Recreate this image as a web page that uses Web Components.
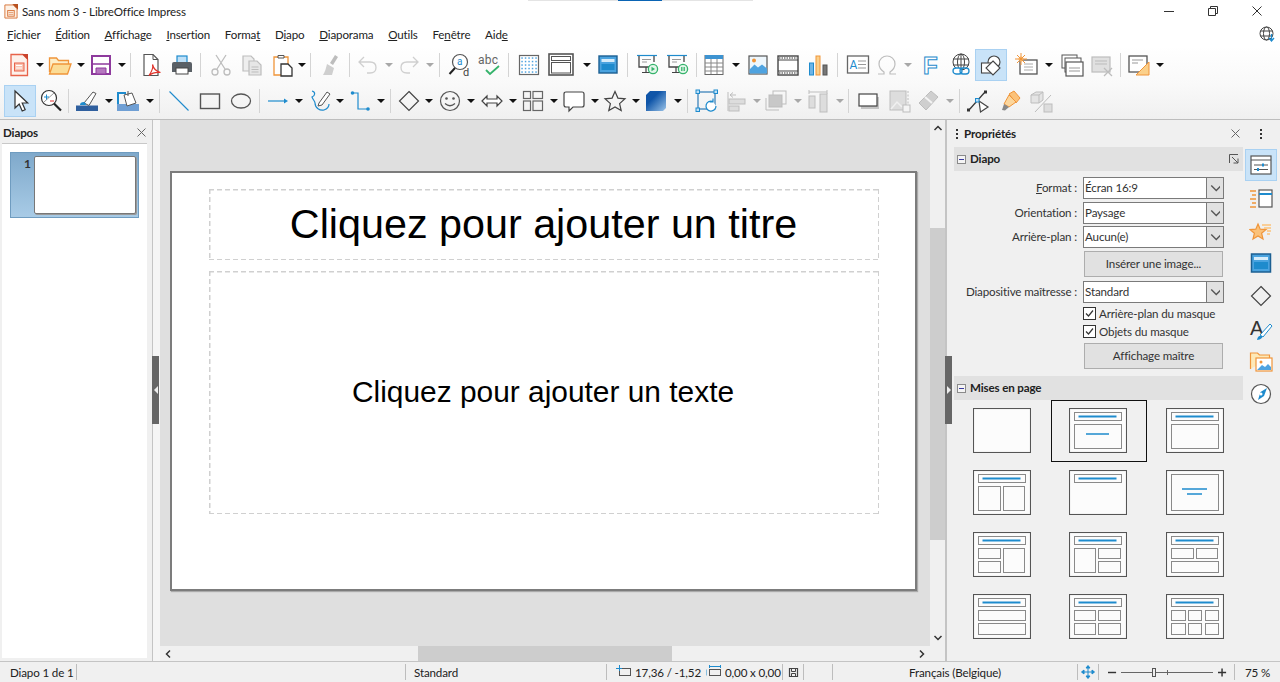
<!DOCTYPE html>
<html lang="fr">
<head>
<meta charset="utf-8">
<title>Sans nom 3 - LibreOffice Impress</title>
<style>
  html, body { margin: 0; height: 100%; overflow: hidden; background: #f0f0f0; }
  body { font: 11.6px Lato, Roboto, "Liberation Sans", sans-serif; letter-spacing: -.14px; color: #222; }
</style>
</head>
<body>
<lo-app>
  <lo-titlebar>Sans nom 3 - LibreOffice Impress</lo-titlebar>
  <lo-menubar></lo-menubar>
  <lo-toolbar h="38" items="new:7 a:5 open:3.5 a:5 save:4 a:5.5 s:4 pdf:8 print:7 s:5.5 cut:8 copy:7 paste:7 a:3.5 s:3.5 clone:7.5 s:6.5 undo:6.5 g:5 redo:3.5 g:5.5 s:4.5 find:8.5 spell:6 s:5.5 grid:8.5 display:8 a:10 master:5 s:6.5 start:7.5 start2:6 s:6.5 table:5 a:6.5 image:5.5 movie:6.5 chart:6 s:6.5 textbox:8 omega:5 g:5.5 fontwork:5 link:8 shapes*:5.5 newslide:12.5 a:6 dup:6.5 del:6.5 s:5.5 layout:6.5 a:5"></lo-toolbar>
  <lo-toolbar h="36" line items="select*:7.5 zoom:7 s:5 linecolor:6.5 a:6 fill:3 a:6 s:4.5 line:7 rect:7 ellipse:7.5 s:5.5 arrowline:6.5 a:5 curve:4.5 a:4.5 connector:3.5 a:5.5 s:4.5 diamond:6 a:4 smiley:5 a:5.5 dbl:4.5 a:5 flow:4 a:5.5 callout:4 a:5 star:4 a:5 cube:4 a:6 s:4.5 rotate:7.5 align:6 g:4 arrange:3 g:6 dist:4 g:6 s:3.5 shadow:8 crop:7.5 filter:4 g:6 s:4.5 points:6.5 glue:8 extrusion:7"></lo-toolbar>
  <lo-main>
    <lo-slides></lo-slides>
    <lo-workspace>
      <lo-slide></lo-slide>
    </lo-workspace>
    <lo-sidebar></lo-sidebar>
  </lo-main>
  <lo-statusbar></lo-statusbar>
</lo-app>

<script>
const BLUE = '#1e8bcd', DARK = '#4a4a4a', GREY = '#bdbdbd', ORANGE = '#f0953a';

function svg(inner, size = 24, vb = 24) {
  return `<svg xmlns="http://www.w3.org/2000/svg" width="${size}" height="${size}" viewBox="0 0 ${vb} ${vb}" fill="none" stroke-linejoin="miter">${inner}</svg>`;
}

function gridDots() {
  let s = '';
  for (let y = 5; y < 21; y += 3.5) for (let x = 5; x < 21; x += 3.5) s += `<rect x="${x - .7}" y="${y - .7}" width="1.5" height="1.5" fill="#4fa3e0"/>`;
  return s;
}

const screenIcon = `<path d="M2 2.5h20" stroke="${BLUE}" stroke-width="1.2"/><path d="M4 3v11h15" stroke="#444" stroke-width="1.3"/><path d="M19 3v6" stroke="#444" stroke-width="1.3"/><path d="M7 6.5h9M7 9h5" stroke="#999"/><path d="M11 14v5M7 19.5h8" stroke="#444" stroke-width="1.2"/><circle cx="18" cy="16" r="4.6" fill="#e3f6ea" stroke="#35b36b" stroke-width="1.3"/>`;

const ICONS = {
  new: `<path d="M4 1.5h12l4.5 4.5v16.500H4z" fill="#fdf1eb" stroke="#e8634a" stroke-width="1.3"/><path d="M15 1h6v6z" fill="#c9432c"/><rect x="7.500" y="10" width="9.500" height="8" fill="#f9c4b2" stroke="#e8634a"/><path d="M9 12.500h6M9 15h6" stroke="#fff"/>`,
  open: `<path d="M1.500 19V5h7l2 2.500h10V12" fill="#fdeec8" stroke="${ORANGE}" stroke-width="1.300"/><path d="M1.500 21l3.500-10h18l-3.500 10z" fill="#fbdc96" stroke="${ORANGE}" stroke-width="1.300"/>`,
  save: `<path d="M3 3h18v18H3z" fill="#fff" stroke="#8e3a9d" stroke-width="2"/><path d="M3 11h18" stroke="#8e3a9d" stroke-width="1.500"/><path d="M7 21v-6h10v6z" fill="#b678c0" stroke="#8e3a9d"/>`,
  pdf: `<path d="M5 1.500h9l5 5v16H5z" fill="#fff" stroke="#555" stroke-width="1.200"/><path d="M14 1.500v5h5" stroke="#555"/><path d="M10 22.500c3.500-5 4.500-8 3.500-11 1 4 3.500 7 8 8-4-.5-8.500.5-11.500 3z" stroke="#e0342c" stroke-width="1.200" fill="#fff"/>`,
  print: `<rect x="7" y="3" width="10" height="7" fill="#bfe0f7" stroke="${BLUE}" stroke-width="1.200"/><path d="M2 19v-8q0-2 2-2h16q2 0 2 2v8z" fill="#5a6066"/><rect x="6" y="15" width="12" height="6" fill="#fff" stroke="#444"/>`,
  cut: `<g stroke="${GREY}" stroke-width="1.300"><path d="M7 2l9 14M17 2L8 16"/><circle cx="6" cy="19" r="3"/><circle cx="18" cy="19" r="3"/></g>`,
  copy: `<path d="M3 3h8l3 3v12H3z" fill="#eee" stroke="${GREY}" stroke-width="1.200"/><path d="M9 8h8l4 4v10H9z" fill="#e6e6e6" stroke="${GREY}" stroke-width="1.200"/><path d="M11.500 14h7M11.500 16.500h7M11.500 19h7" stroke="${GREY}"/>`,
  paste: `<path d="M3 4h14v18H3z" fill="#fff" stroke="${ORANGE}" stroke-width="1.300"/><path d="M7 5V2.500h6V5z" fill="#fff" stroke="#555"/><path d="M10 11h7l4 4v8H10z" fill="#fff" stroke="#333" stroke-width="1.300"/>`,
  clone: `<path d="M17 2l3 2-5 8-3-2z" fill="${GREY}"/><path d="M9 11l7 4-2 7H5c2-3 3-7 4-11z" fill="#cfcfcf"/>`,
  undo: `<path d="M8 4L3 9l5 5M3 9h11q6 0 6 5.500T14 20h-3" stroke="#cfcfcf" stroke-width="1.300"/>`,
  redo: `<path d="M16 4l5 5-5 5M21 9H10q-6 0-6 5.500T10 20h3" stroke="#cfcfcf" stroke-width="1.300"/>`,
  find: `<circle cx="12" cy="9" r="7.500" fill="#fff" stroke="#555" stroke-width="1.200"/><path d="M7 15l-5.500 6" stroke="#222" stroke-width="2"/><text x="9" y="12" font-size="10" fill="${BLUE}" font-family="Roboto">a</text><text x="15" y="23" font-size="11" fill="#444" font-family="Roboto">d</text>`,
  spell: `<text x="0" y="11" font-size="12" letter-spacing=".3" fill="#666" font-family="Roboto">abc</text><path d="M8 17l4 4 9-8" stroke="#35b36b" stroke-width="1.800"/>`,
  grid: `<rect x="2.500" y="2.500" width="19" height="19" fill="#fff" stroke="#666" stroke-width="1.200"/>${gridDots()}`,
  display: `<rect x="0" y="1" width="24" height="21" fill="#fff" stroke="#555" stroke-width="1.600"/><rect x="2.500" y="3.500" width="19" height="4" stroke="#555"/><rect x="2.500" y="9.500" width="19" height="10.500" stroke="#555"/>`,
  master: `<rect x="3" y="3" width="18" height="17" fill="#4aa3df" stroke="#1c5f92" stroke-width="1.400"/><rect x="5.500" y="6" width="13" height="3" fill="#d6ecfa"/><rect x="5.500" y="11" width="13" height="6" fill="#1e8bcd"/>`,
  start: `${screenIcon}<path d="M16.500 13.800v4.400l3.500-2.200z" fill="#35b36b"/>`,
  start2: `${screenIcon}<path d="M16.800 14v4M19.200 14v4" stroke="#35b36b" stroke-width="1.300"/>`,
  table: `<rect x="3" y="2.500" width="18" height="19" fill="#fff" stroke="#666"/><rect x="3" y="2" width="18" height="4" fill="#3d93d1"/><path d="M3 10h18M3 14h18M3 18h18M9 6v15M15 6v15" stroke="#888"/>`,
  image: `<rect x="3" y="3" width="18" height="18" fill="#eef7fd" stroke="#555" stroke-width="1.200"/><circle cx="8" cy="7.500" r="2" fill="${ORANGE}"/><path d="M3.500 20.500v-4l5-5 3.500 3 4-3 5 4v5z" fill="#4fa3e0"/>`,
  movie: `<rect x="2" y="3" width="20" height="19" fill="#fff" stroke="#444" stroke-width="1.400"/><path d="M2 7h20M2 18h20" stroke="#444"/><path d="M3 5h18M3 20h18" stroke="#777" stroke-width="1.500" stroke-dasharray="1.500 1"/>`,
  chart: `<rect x="3.500" y="10" width="4" height="12" fill="#6db4e6" stroke="${BLUE}"/><rect x="10" y="3" width="4" height="19" fill="#fbd08a" stroke="${ORANGE}"/><rect x="17" y="12" width="4" height="10" fill="#777" stroke="#555"/>`,
  textbox: `<rect x="1.500" y="3" width="21" height="17" fill="#fff" stroke="#666" stroke-width="1.300"/><text x="3.500" y="16" font-size="12" fill="${BLUE}" font-family="Roboto">A</text><path d="M12 8h8M12 11.500h8M12 15h8" stroke="#999"/>`,
  omega: `<path d="M3 21h6v-2c-3-2-5-5-5-8 0-5 4-8 8-8s8 3 8 8c0 3-2 6-5 8v2h6" stroke="${GREY}" stroke-width="1.200"/>`,
  fontwork: `<text x="6" y="21" font-size="24" font-weight="700" fill="#fff" stroke="${BLUE}" font-family="Liberation Sans">F</text>`,
  link: `<circle cx="12" cy="9" r="8" fill="#fff" stroke="#444"/><ellipse cx="12" cy="9" rx="3.500" ry="8" stroke="#444"/><path d="M4 6h16M4 12h16M12 1v16" stroke="#444"/><rect x="4" y="15" width="9" height="6" rx="3" fill="#fff" stroke="${BLUE}" stroke-width="1.300"/><rect x="11" y="15" width="9" height="6" rx="3" stroke="${BLUE}" stroke-width="1.300"/>`,
  shapes: `<circle cx="15" cy="9" r="6" fill="#fff" stroke="#444" stroke-width="1.100"/><rect x="2.500" y="10" width="11" height="10" fill="#fff" stroke="#444" stroke-width="1.100"/><path d="M14 8l7 7-7 7-7-7z" fill="#fff" stroke="#444" stroke-width="1.100"/>`,
  newslide: `<rect x="5" y="7" width="17" height="14" fill="#fff" stroke="#555" stroke-width="1.300"/><path d="M9 11h9M9 14h9M9 17h9" stroke="#aaa"/><circle cx="6" cy="6" r="2.500" fill="#fbc27a"/><path d="M6 0v12M0 6h12M2 2l8 8M10 2l-8 8" stroke="${ORANGE}"/>`,
  dup: `<rect x="2" y="2" width="15" height="13" fill="#fff" stroke="#555"/><rect x="5" y="5" width="16" height="14" fill="#fff" stroke="#555"/><rect x="6" y="9" width="17" height="14" fill="#fff" stroke="#555" stroke-width="1.200"/><path d="M9 15h11M9 18h11" stroke="#999"/>`,
  del: `<rect x="2" y="4" width="18" height="15" fill="#e0e0e0" stroke="${GREY}" stroke-width="1.200"/><path d="M5 8h12M5 11h12" stroke="#bbb"/><path d="M14 15l8 8M22 15l-8 8" stroke="${GREY}" stroke-width="1.300"/>`,
  layout: `<rect x="2" y="3" width="18" height="16" fill="#fff" stroke="#555" stroke-width="1.300"/><path d="M5 7h11M5 10h6" stroke="#999"/><path d="M22 9v13H9z" fill="#fbd08a" stroke="${ORANGE}"/>`,
  select: `<path d="M7 2v17l4.200-4 3 7 3-1.300-3-6.700h5.500z" fill="#fff" stroke="#333" stroke-width="1.200"/>`,
  zoom: `<circle cx="10" cy="9" r="7.500" fill="#fff" stroke="#333" stroke-width="1.200"/><path d="M5 13l10-9" stroke="#999"/><path d="M5 8h5M7.500 5.500v5" stroke="${BLUE}"/><path d="M11 12h4" stroke="#d33"/><path d="M15 14.500l7 7" stroke="#222" stroke-width="2.200"/>`,
  linecolor: `<rect x="1" y="16.500" width="22" height="5.500" fill="#2f5f9e"/><path d="M9 14l9-11 3 1.500-7 12z" fill="#fff" stroke="#555"/><path d="M5 16q0-3 4-3 2 .5 2 3z" fill="${BLUE}"/>`,
  fill: `<rect x="1" y="15" width="22" height="7" fill="#6f9fd4"/><path d="M8 6l8-2 4 10-9 3z" fill="#fff" stroke="#555"/><path d="M2 15V4h8" stroke="${BLUE}" stroke-width="2"/><path d="M12 7V2" stroke="#555"/>`,
  line: `<path d="M2.500 2.500l19 19" stroke="${BLUE}" stroke-width="1.100"/>`,
  rect: `<rect x="2.500" y="5" width="19" height="14.500" stroke="#555" stroke-width="1.400"/>`,
  ellipse: `<ellipse cx="12" cy="12" rx="9.500" ry="7" stroke="#555" stroke-width="1.300"/>`,
  arrowline: `<path d="M2 12h17" stroke="${BLUE}" stroke-width="1.200"/><path d="M18 9.500l4 2.500-4 2.500z" fill="${BLUE}"/>`,
  curve: `<path d="M4 2c4 1 3 5 0 6 1 3 3 4 3 6 0 5 5 8 9 7 3-1 5-3 5-6" stroke="${BLUE}" stroke-width="1.200"/><path d="M11 14l8-11 3 2-8 11-4 1z" fill="#fff" stroke="#555"/>`,
  connector: `<path d="M5 4h5v16h10" stroke="${BLUE}" stroke-width="1.200"/><circle cx="4.500" cy="4" r="1.800" fill="${BLUE}"/><circle cx="20" cy="20" r="1.800" fill="${BLUE}"/>`,
  diamond: `<path d="M12 2.500l9.500 9.500-9.500 9.500L2.500 12z" stroke="#444" stroke-width="1.200"/>`,
  smiley: `<circle cx="12" cy="12" r="9.500" stroke="#555" stroke-width="1.200"/><circle cx="8.500" cy="9.500" r="1.300" fill="#555"/><circle cx="15.500" cy="9.500" r="1.300" fill="#555"/><path d="M7 14.500q5 4.500 10 0" stroke="#555" stroke-width="1.200"/>`,
  dbl: `<path d="M2 12l5-5v3h10V7l5 5-5 5v-3H7v3z" fill="#fff" stroke="#444" stroke-width="1.200"/>`,
  flow: `<g stroke="#666" stroke-width="1.200"><rect x="2.500" y="2.500" width="7" height="7"/><rect x="12" y="2.500" width="9.500" height="7"/><rect x="2.500" y="12" width="7" height="9.500"/><rect x="12" y="12" width="9.500" height="9.500"/></g>`,
  callout: `<path d="M4 3h16q2 0 2 2v11q0 2-2 2H11l-4 4v-4H4q-2 0-2-2V5q0-2 2-2z" fill="#fff" stroke="#444" stroke-width="1.200"/>`,
  star: `<path d="M12 2.500l2.900 6.600 7.100.7-5.400 4.800 1.600 7-6.200-3.700-6.200 3.700 1.600-7L2 9.800l7.100-.7z" stroke="#444" stroke-width="1.200"/>`,
  cube: `<defs><linearGradient id="cb" x1="0" y1="0" x2="1" y2="1"><stop offset=".35" stop-color="#0f55a8"/><stop offset="1" stop-color="#9cc4e8"/></linearGradient></defs><path d="M6 2h16v17l-3 3H2V6z" fill="url(#cb)"/>`,
  rotate: `<rect x="3" y="3" width="17" height="17" stroke="#1c6fb0" stroke-width="1.100"/><rect x="1" y="1" width="3.500" height="3.500" fill="#bfe0f7" stroke="${BLUE}"/><rect x="19" y="1" width="3.500" height="3.500" fill="#bfe0f7" stroke="${BLUE}"/><rect x="1" y="19" width="3.500" height="3.500" fill="#bfe0f7" stroke="${BLUE}"/><path d="M21 17a5 5 0 1 1-3-4.500M18 9.500v3.500h-3.500" stroke="${BLUE}" stroke-width="1.200" fill="#fff"/>`,
  align: `<path d="M3 3v19" stroke="${GREY}"/><path d="M5 6h6M5 6l3-2.500M5 6l3 2.500" stroke="${GREY}"/><rect x="4" y="10" width="16" height="5" fill="#ddd" stroke="${GREY}"/><rect x="4" y="17" width="10" height="5" fill="#ddd" stroke="${GREY}"/>`,
  arrange: `<rect x="9" y="2" width="13" height="13" stroke="${GREY}"/><rect x="5" y="6" width="13" height="12" fill="#c8c8c8" stroke="${GREY}"/><path d="M2 9v12h13" stroke="${GREY}"/>`,
  dist: `<path d="M3 3h18M3 1v4M21 1v4" stroke="${GREY}"/><rect x="3" y="7" width="6" height="12" fill="#ddd" stroke="${GREY}"/><rect x="14" y="5" width="7" height="18" fill="#ddd" stroke="${GREY}"/>`,
  shadow: `<rect x="4" y="8" width="18" height="12" fill="#c4c4c4"/><rect x="2" y="5" width="18" height="12" fill="#fff" stroke="#444" stroke-width="1.200"/>`,
  crop: `<rect x="2" y="2" width="16" height="19" fill="#ddd" stroke="${GREY}"/><path d="M3 20l6-7 5 5" stroke="#f0f0f0" stroke-width="1.500"/><path d="M20 2v14" stroke="${GREY}" stroke-dasharray="2 1.500"/><rect x="15" y="16" width="7" height="7" fill="#f4f4f4" stroke="${GREY}"/>`,
  filter: `<path d="M3 14L15 2l7 6L10 21z" fill="#cfcfcf" stroke="${GREY}"/><path d="M9 8l7 6" stroke="#f4f4f4" stroke-width="2"/>`,
  points: `<path d="M3 21L19 3" stroke="#333" stroke-width="1.200"/><rect x="1" y="19.500" width="3" height="3" fill="#333"/><rect x="18" y="1.500" width="3" height="3" fill="#333"/><path d="M13 12l9 6-7.500 5z" fill="#fff" stroke="#444" stroke-width="1.200"/><rect x="9.500" y="9.500" width="3.500" height="3.500" fill="#bfe0f7" stroke="${BLUE}"/>`,
  glue: `<path d="M11 5l5-3 6 7-4 5-7-9z" fill="#fbc27a" stroke="${ORANGE}"/><path d="M11 6L6 15l5 3 7-5z" fill="#fcd69c" stroke="${ORANGE}"/><path d="M6 15l-2 6 3 .5 4-3.500z" fill="#888"/>`,
  extrusion: `<path d="M2 6l5-3h7v8l-4 3H2z" fill="#e4e4e4" stroke="${GREY}"/><path d="M2 6h8v8M10 6l4-3" stroke="${GREY}"/><path d="M6 23L22 6" stroke="${GREY}"/><rect x="15" y="15" width="8" height="8" fill="#ddd" stroke="${GREY}"/>`,
};

const TABS = {
  props: `<rect x="2" y="3" width="20" height="18" fill="#fff" stroke="#555" stroke-width="1.200"/><path d="M2 7h20" stroke="#555"/><path d="M5 12h14M5 16.500h14" stroke="#555"/><rect x="13" y="10.500" width="2" height="3" fill="${BLUE}"/><rect x="8" y="15" width="2" height="3" fill="${BLUE}"/>`,
  trans: `<rect x="10" y="4" width="13" height="17" fill="#fff" stroke="#555" stroke-width="1.200"/><path d="M10 8h13" stroke="${BLUE}" stroke-width="2"/><path d="M1 5h6M3 9h4M1 13h6M3 17h4M1 21h6" stroke="${ORANGE}" stroke-width="1.300"/>`,
  anim: `<path d="M9 5l2.200 5.200 5.800.4-4.400 3.600 1.400 5.800L9 17l-5 3 1.400-5.800L1 10.600l5.800-.4z" fill="#fbc27a" stroke="${ORANGE}" stroke-width="1.200"/><path d="M13 6h9M15 9h7M18 12h4M18 15h3" stroke="#fbc27a" stroke-width="1.300"/>`,
  master: `<rect x="2.500" y="3" width="19" height="18" fill="#4aa3df" stroke="#1c5f92" stroke-width="1.500"/><rect x="5" y="6" width="14" height="3" fill="#d6ecfa"/><rect x="5" y="11" width="14" height="7" fill="#1e8bcd"/>`,
  shapes: `<path d="M12 2.500l9.500 9.500-9.500 9.500L2.500 12z" stroke="#444" stroke-width="1.200"/>`,
  styles: `<text x="1" y="18" font-size="20" fill="#333" font-family="Liberation Sans">A</text><path d="M11 18L21 7l2 2-9 11z" fill="#fff" stroke="${BLUE}"/><path d="M8 23q1-5 5-4 1 3-5 4z" fill="${BLUE}"/>`,
  gallery: `<path d="M1.500 20V4h7l2 2h10v3" fill="#fde9b8" stroke="${ORANGE}" stroke-width="1.200"/><rect x="7" y="9" width="16" height="13" fill="#fff" stroke="${ORANGE}" stroke-width="1.200"/><circle cx="12" cy="13" r="1.500" fill="${ORANGE}"/><path d="M8 21l5-5 3 2 3-3 3 3v3z" fill="#4fa3e0"/>`,
  nav: `<circle cx="12" cy="12" r="9.500" fill="#fff" stroke="#555" stroke-width="1.200"/><path d="M18 6l-3 8-6 4 2.500-8z" fill="${BLUE}"/><circle cx="12" cy="12" r="1.500" fill="#fff"/>`,
};

class LoApp extends HTMLElement {
  constructor() {
    super();
    this.attachShadow({mode: 'open'}).innerHTML = `
      <style>:host { display: flex; flex-direction: column; width: 1280px; height: 682px; position: relative; overflow: hidden; }
        .strip { position: absolute; left: 528px; top: 0; width: 225px; height: 1px; background: linear-gradient(90deg, #e4e4e4 0 90px, #0a64b4 90px 134px, #e4e4e4 134px); }
      </style>
      <slot></slot><div class="strip"></div>`;
  }
}

class LoTitlebar extends HTMLElement {
  constructor() {
    super();
    this.attachShadow({mode: 'open'}).innerHTML = `
      <style>
        :host { display: flex; align-items: center; height: 22px; padding-left: 3px; background: #fff; color: #222; flex: none; }
        .doc { margin-right: 4px; display: flex; }
        .title { flex: 1; }
        .win { width: 44px; display: flex; justify-content: center; }
        .win:first-of-type { margin-right: -2px; }
        .win:last-child { margin-right: 1px; }
      </style>
      <span class="doc">${svg(`<path d="M2 1h9l4 4v10H2z" fill="#fdf1e6" stroke="#d8743a"/><path d="M10 0h6v6z" fill="#b8501e"/><rect x="5" y="7" width="7" height="6" stroke="#d8743a"/><path d="M6 9h5M6 11h5" stroke="#d8743a" stroke-width=".7"/>`, 15, 16)}</span>
      <span class="title"><slot></slot></span>
      <span class="win">${svg(`<path d="M0 5.500h10" stroke="#333"/>`, 10, 10)}</span>
      <span class="win">${svg(`<path d="M.5 2.500h7v7h-7zM2.500 2.500v-2h7v7h-2" stroke="#333"/>`, 10, 10)}</span>
      <span class="win">${svg(`<path d="M.5 .5l9 9M9.500 .5l-9 9" stroke="#333"/>`, 10, 10)}</span>`;
  }
}

class LoMenubar extends HTMLElement {
  constructor() {
    super();
    const items = ['<u>F</u>ichier', '<u>É</u>dition', '<u>A</u>ffichage', '<u>I</u>nsertion', 'Forma<u>t</u>', 'D<u>i</u>apo', '<u>D</u>iaporama', '<u>O</u>utils', 'Fe<u>n</u>être', 'Aid<u>e</u>'];
    this.attachShadow({mode: 'open'}).innerHTML = `
      <style>
        :host { display: flex; align-items: center; gap: 14.700px; height: 24px; padding-left: 7px; background: #fff; color: #222; flex: none; position: relative; }
        .globe { margin-left: auto; margin-right: 5px; display: flex; }
      </style>
      ${items.map(t => `<span>${t}</span>`).join('')}
      <span class="globe">${svg(`<circle cx="7.500" cy="7.500" r="6.500" fill="#fff" stroke="#444"/><ellipse cx="7.500" cy="7.500" rx="3" ry="6.500" stroke="#444"/><path d="M1.500 5h12M1.500 10h12" stroke="#444"/><path d="M12.500 8v6M10 12l2.500 3 2.500-3" stroke="${BLUE}" stroke-width="1.300"/>`, 16, 16)}</span>`;
  }
}

class LoTool extends HTMLElement {
  constructor() {
    super();
    this.attachShadow({mode: 'open'}).innerHTML = `
      <style>
        :host { display: flex; flex: none; align-items: center; justify-content: center; width: 24px; height: 24px; letter-spacing: 0; }
        :host([active]) { background: #c9e3f8; box-shadow: 0 0 0 3px #c9e3f8, 0 0 0 4px #a9d1f2; }
        :host([kind=arrow]) { width: 8px; }
        :host([kind=sep]) { width: 1px; height: 24px; background: #d4d4d4; }
        .tri { width: 0; height: 0; border: 4px solid transparent; border-top: 4px solid #111; border-bottom: 0; }
        :host([off]) .tri { border-top-color: #a8a8a8; }
        svg { display: block; overflow: visible; }
      </style><slot></slot><span id="c"></span>`;
  }
  connectedCallback() {
    const c = this.shadowRoot.getElementById('c');
    const kind = this.getAttribute('kind');
    if (kind === 'arrow') c.className = 'tri';
    else if (kind === 'icon') c.innerHTML = svg(ICONS[this.getAttribute('icon')]);
  }
}

class LoToolbar extends HTMLElement {
  constructor() {
    super();
    this.attachShadow({mode: 'open'}).innerHTML = `
      <style>
        :host { display: flex; align-items: center; flex: none; box-sizing: border-box; }
        :host([line]) { border-bottom: 1px solid #bdbdbd; padding-bottom: 1px; }
      </style><slot></slot>`;
  }
  connectedCallback() {
    this.style.height = this.getAttribute('h') + 'px';
    // the two rows share one gradient, white under the menu to light grey at the rule
    const top = this.hasAttribute('line');
    this.style.background = top ? 'linear-gradient(#f9f9f9, #f0f0f0)' : 'linear-gradient(#fff, #f9f9f9)';
    for (const item of this.getAttribute('items').split(' ')) {
      let [name, gap] = item.split(':');
      const t = document.createElement('lo-tool');
      if (name.endsWith('*')) { name = name.slice(0, -1); t.setAttribute('active', ''); }
      if (name === 's') t.setAttribute('kind', 'sep');
      else if (name === 'a' || name === 'g') {
        t.setAttribute('kind', 'arrow');
        if (name === 'g') t.setAttribute('off', '');
      } else { t.setAttribute('kind', 'icon'); t.setAttribute('icon', name); }
      t.style.marginLeft = gap + 'px';
      this.appendChild(t);
    }
  }
}

class LoMain extends HTMLElement {
  constructor() {
    super();
    this.attachShadow({mode: 'open'}).innerHTML = `
      <style>:host { display: flex; flex: none; height: 541px; }</style><slot></slot>`;
  }
}

const closeX = svg(`<path d="M.5 .5l8 8M8.500 .5l-8 8" stroke="#666"/>`, 9, 9);

class LoSlides extends HTMLElement {
  constructor() {
    super();
    this.attachShadow({mode: 'open'}).innerHTML = `
      <style>
        :host { display: flex; flex-direction: column; width: 153px; flex: none; box-sizing: border-box; border-right: 1px solid #c4c4c4; background: #f0f0f0; }
        header { display: flex; align-items: center; justify-content: space-between; height: 21px; padding: 2px 6px 0 3px; font-weight: 700; flex: none; }
        .list { flex: 1; margin: 0 5px 3px 2px; background: #fff; border-top: 1px solid #c8c8c8; padding: 8px; }
        .thumb { display: flex; width: 129px; height: 66px; box-sizing: border-box; background: linear-gradient(#7fa9cb, #a8cbe6); border: 1px solid #6f9cc0; padding: 3px 2px 3px 23px; position: relative; }
        .thumb b { position: absolute; left: 13px; top: 3px; font-size: 12px; color: #333; }
        .page { flex: 1; background: #fff; border: 1px solid #777; border-radius: 2px; box-shadow: 1px 1px 0 #999; }
      </style>
      <header>Diapos ${closeX}</header>
      <div class="list"><div class="thumb"><b>1</b><div class="page"></div></div></div>`;
  }
}

class LoScrollbar extends HTMLElement {
  constructor() {
    super();
    const vertical = this.hasAttribute('vertical');
    const before = this.getAttribute('before'), size = this.getAttribute('size');
    const tracks = `16px ${before}px ${size}px 1fr 16px`;
    const chev = d => `<span class="c">${svg(`<path d="${d}" stroke="#333" stroke-width="1.500"/>`, 10, 10)}</span>`;
    this.attachShadow({mode: 'open'}).innerHTML = `
      <style>
        :host { display: grid; flex: none; background: #f0f0f0; ${vertical ? `width: 15px; grid-template-rows: ${tracks};` : `height: 15px; grid-template-columns: ${tracks};`} }
        .c { display: flex; align-items: center; justify-content: center; }
        .t { background: #cdcdcd; }
      </style>
      ${chev(vertical ? 'M1.500 7L5 3.500 8.500 7' : 'M7 1.500L3.500 5 7 8.500')}
      <span></span><span class="t"></span><span></span>
      ${chev(vertical ? 'M1.500 3L5 6.500 8.500 3' : 'M3 1.500L6.500 5 3 8.500')}`;
  }
}

class LoWorkspace extends HTMLElement {
  constructor() {
    super();
    this.attachShadow({mode: 'open'}).innerHTML = `
      <style>
        :host { display: grid; grid-template-columns: 1fr auto; grid-template-rows: 1fr auto; flex: none; width: 792px; position: relative; box-sizing: border-box; padding-left: 7px; background: #f5f5f5; }
        .view { background: #dfdfdf; padding: 51px 0 0 10px; overflow: hidden; }
        .corner { background: #f0f0f0; }
        .h { position: absolute; left: -1px; top: 236px; width: 7px; height: 68px; background: #666; display: flex; align-items: center; justify-content: center; }
        .h::after { content: ""; border: 4px solid transparent; border-right: 4px solid #eee; border-left: 0; }
      </style>
      <div class="view"><slot></slot></div>
      <lo-scrollbar vertical before="92" size="312"></lo-scrollbar>
      <lo-scrollbar before="242" size="254"></lo-scrollbar>
      <div class="corner"></div>
      <div class="h"></div>`;
  }
}

class LoSlide extends HTMLElement {
  constructor() {
    super();
    const dash = '#d0d0d0';
    this.attachShadow({mode: 'open'}).innerHTML = `
      <style>
        :host { display: flex; flex-direction: column; gap: 11px; width: 747px; height: 420px; box-sizing: border-box; background: #fff; border: 2px solid #7c7c7c; box-shadow: 1px 1px 1px #aaa; padding: 16px 36px 0 37px; font-family: "Liberation Sans", Arial, sans-serif; letter-spacing: 0; color: #000; }
        div { display: flex; align-items: center; justify-content: center; box-sizing: border-box;
          background:
            repeating-linear-gradient(90deg, ${dash} 0 5px, transparent 5px 8px) top / 100% 1.5px no-repeat,
            repeating-linear-gradient(90deg, ${dash} 0 5px, transparent 5px 8px) bottom / 100% 1.5px no-repeat,
            repeating-linear-gradient(${dash} 0 5px, transparent 5px 8px) left / 1.5px 100% no-repeat,
            repeating-linear-gradient(${dash} 0 5px, transparent 5px 8px) right / 1.5px 100% no-repeat;
        }
        .t { height: 71px; font-size: 41.300px; padding-right: 1px; }
        .b { height: 243px; font-size: 29.900px; padding: 0 2px 2px 0; }
      </style>
      <div class="t">Cliquez pour ajouter un titre</div>
      <div class="b">Cliquez pour ajouter un texte</div>`;
  }
}

class LoCombo extends HTMLElement {
  constructor() {
    super();
    this.attachShadow({mode: 'open'}).innerHTML = `
      <style>
        :host { display: flex; width: 141px; height: 22px; box-sizing: border-box; border: 1px solid #7a7a7a; background: #fff; align-items: center; }
        span { flex: 1; padding: 0 0 1px 1px; }
        i { width: 16px; height: 100%; border-left: 1px solid #7a7a7a; background: #e1e1e1; display: flex; align-items: center; justify-content: center; }
      </style>
      <span><slot></slot></span><i>${svg(`<path d="M1 2l4 4 4-4" stroke="#555" stroke-width="1.100"/>`, 10, 8)}</i>`;
  }
}

class LoButton extends HTMLElement {
  constructor() {
    super();
    this.attachShadow({mode: 'open'}).innerHTML = `
      <style>:host { display: flex; align-items: center; justify-content: center; width: 139px; height: 26px; margin-left: 1px; box-sizing: border-box; padding-bottom: 1px; border: 1px solid #adadad; background: #e1e1e1; }</style><slot></slot>`;
  }
}

class LoCheck extends HTMLElement {
  constructor() {
    super();
    this.attachShadow({mode: 'open'}).innerHTML = `
      <style>
        :host { display: flex; align-items: center; gap: 3px; height: 18px; }
        i { width: 13px; height: 13px; display: flex; box-sizing: border-box; border: 1px solid #333; background: #fff; align-items: center; justify-content: center; }
      </style>
      <i>${svg(`<path d="M1 4.500l2.500 2.500L8 1.500" stroke="#333" stroke-width="1.200"/>`, 9, 9)}</i><span><slot></slot></span>`;
  }
}

class LoSection extends HTMLElement {
  constructor() {
    super();
    this.attachShadow({mode: 'open'}).innerHTML = `
      <style>
        :host { display: block; }
        header { display: flex; align-items: center; height: 24px; background: #e1e1e1; font-weight: 700; color: #222; padding: 0 4px 0 3px; gap: 4px; }
        header i { width: 9px; height: 9px; box-sizing: border-box; border: 1px solid #8a8a8a; background: #f4f4f4; display: flex; align-items: center; justify-content: center; }
        header i::before { content: ""; width: 5px; height: 1px; background: #3a3aa0; }
        header span { flex: 1; padding-bottom: 2px; }
      </style>
      <header><i></i><span>${this.getAttribute('heading')}</span>${this.hasAttribute('more') ? svg(`<path d="M9 .5H.5V9" stroke="#555"/><path d="M3 3l6 6M9 4.500V9H4.500" stroke="#555"/>`, 10, 10) : ''}</header>
      <slot></slot>`;
  }
}

class LoLayoutThumb extends HTMLElement {
  constructor() {
    super();
    const r = (x, y, w, h) => `<rect x="${x}.500" y="${y}.500" width="${w}" height="${h}" fill="#fcfcfc" stroke="#8a8a8a"/>`;
    const title = r(5, 4, 47, 8) + `<path d="M9.500 8.500h38" stroke="${BLUE}" stroke-width="2"/>`;
    const L = [
      '',
      title + r(5, 16, 47, 24) + `<path d="M17 26h23" stroke="${BLUE}" stroke-width="1.500"/>`,
      title + r(5, 16, 47, 24),
      title + r(5, 16, 22, 24) + r(30, 16, 21, 24),
      title,
      r(5, 4, 47, 36) + `<path d="M16 19h25M21 24h15" stroke="${BLUE}" stroke-width="1.500"/>`,
      title + r(5, 16, 22, 10) + r(5, 29, 22, 11) + r(30, 16, 21, 24),
      title + r(5, 16, 21, 24) + r(29, 16, 22, 10) + r(29, 29, 22, 11),
      title + r(5, 16, 22, 10) + r(30, 16, 21, 10) + r(5, 29, 47, 11),
      title + r(5, 16, 47, 10) + r(5, 29, 47, 11),
      title + r(5, 16, 21, 10) + r(29, 16, 22, 10) + r(5, 29, 21, 11) + r(29, 29, 22, 11),
      title + r(5, 16, 14, 10) + r(22, 16, 13, 10) + r(39, 16, 13, 10) + r(5, 29, 14, 11) + r(22, 29, 13, 11) + r(39, 29, 13, 11),
    ][+this.getAttribute('kind')];
    this.attachShadow({mode: 'open'}).innerHTML = `
      <style>
        :host { display: flex; align-items: center; justify-content: center; width: 96px; height: 62px; box-sizing: border-box; padding: 0 1px 2px 0; }
        :host([selected]) { outline: 1px solid #111; outline-offset: -1px; }
      </style>
      <svg width="58" height="45" viewBox="0 0 58 45" fill="none"><rect x=".5" y=".5" width="57" height="44" fill="#fcfcfc" stroke="#555" stroke-width="1.100"/>${L}</svg>`;
  }
}

class LoSidebar extends HTMLElement {
  constructor() {
    super();
    let thumbs = '';
    for (let k = 0; k < 12; k++) thumbs += `<lo-layout-thumb kind="${k}"${k === 1 ? ' selected' : ''}></lo-layout-thumb>`;
    const tabs = Object.keys(TABS).map((k, i) => `<span class="tab${i ? '' : ' on'}">${svg(TABS[k])}</span>`).join('');
    this.attachShadow({mode: 'open'}).innerHTML = `
      <style>
        :host { display: flex; flex: 1; min-width: 0; position: relative; border-left: 2px solid #c4c4c4; background: #f0f0f0; color: #333; }
        .deck { width: 298px; flex: none; box-sizing: border-box; padding-left: 7px; padding-right: 2px; }
        .head { display: flex; align-items: center; height: 27px; font-weight: 700; color: #222; gap: 6px; padding-left: 2px; padding-right: 3px; }
        .head span:not(.dots) { flex: 1; }
        .dots { display: flex; flex-direction: column; gap: 2px; flex: none; }
        .dots i { width: 2px; height: 2px; background: #333; }
        .form { display: grid; grid-template-columns: 123px auto; column-gap: 6px; row-gap: 2.500px; padding: 6px 0 7.500px; justify-items: start; align-items: center; }
        .form > * { grid-column: 2; }
        .form > label { grid-column: 1; justify-self: end; padding-bottom: 1px; }
        .img { margin-top: .5px; }
        .std { margin-top: 1.500px; }
        .tight { margin: -1.500px 0 -2.500px; }
        .grid { display: grid; grid-template-columns: repeat(3, 96.500px); }
        .tabs { flex: 1; display: flex; flex-direction: column; align-items: center; padding-right: 4px; }
        .tabs .dots { height: 27px; justify-content: center; margin-bottom: 2px; }
        .tab { width: 24px; height: 24px; display: flex; align-items: center; justify-content: center; margin: 4.350px 0; }
        .tab.on { background: #c9e3f8; box-shadow: 0 0 0 3px #c9e3f8, 0 0 0 4px #a9d1f2; }
        .tab svg { display: block; }
        .h { position: absolute; left: -2px; top: 236px; width: 7px; height: 68px; background: #666; display: flex; align-items: center; justify-content: center; }
        .h::after { content: ""; border: 4px solid transparent; border-left: 4px solid #eee; border-right: 0; }
      </style>
      <div class="deck">
        <div class="head"><span class="dots"><i></i><i></i><i></i></span><span>Propriétés</span>${closeX}</div>
        <lo-section heading="Diapo" more>
          <div class="form">
            <label><u>F</u>ormat :</label><lo-combo>Écran 16:9</lo-combo>
            <label>Orientation :</label><lo-combo>Paysage</lo-combo>
            <label>Arrière-plan :</label><lo-combo>Aucun(e)</lo-combo>
            <lo-button class="img">Insérer une image...</lo-button>
            <label class="std">Diapositive maîtresse :</label><lo-combo class="std">Standard</lo-combo>
            <lo-check class="tight">Arrière-plan du masque</lo-check>
            <lo-check>Objets du masque</lo-check>
            <lo-button>Affichage maître</lo-button>
          </div>
        </lo-section>
        <lo-section heading="Mises en page"><div class="grid">${thumbs}</div></lo-section>
      </div>
      <div class="tabs"><span class="dots"><i></i><i></i><i></i></span>${tabs}</div>
      <div class="h"></div>`;
  }
}

class LoStatusbar extends HTMLElement {
  constructor() {
    super();
    this.attachShadow({mode: 'open'}).innerHTML = `
      <style>
        :host { display: flex; flex: none; align-items: center; height: 21px; box-sizing: border-box; border-top: 1px solid #c4c4c4; background: #f0f0f0; color: #222; }
        span { display: flex; align-items: center; height: 16px; box-sizing: border-box; flex: none; white-space: nowrap; }
        .s { border-left: 1px solid #bdbdbd; }
        svg { display: block; flex: none; }
        .slider { position: relative; width: 92px; height: 1px; background: #666; margin: 0 5px 0 4px; }
        .slider::before { content: ""; position: absolute; left: 31px; top: -4px; width: 4px; height: 9px; box-sizing: border-box; border: 1px solid #555; background: #eee; }
        .slider::after { content: ""; position: absolute; left: 46px; top: -2px; width: 1px; height: 5px; background: #666; }
      </style>
      <span style="width:76px;padding-left:10px">Diapo 1 de 1</span>
      <span class="s" style="width:329px"></span>
      <span class="s" style="width:201px;padding-left:8px">Standard</span>
      <span class="s" style="width:176px;padding-left:9px">${svg(`<rect x="3.500" y="3.500" width="11" height="7" stroke="#555"/><path d="M3.500 0v6M0 3.500h6" stroke="${BLUE}"/>`, 15, 15)}<span style="margin:0 5px 0 4px">17,36 / -1,52</span>${svg(`<rect x="3.500" y="4.500" width="11" height="6" stroke="#555"/><path d="M3.500 0v3M14.500 0v3M3.500 1.500h11M0 4.500v6" stroke="${BLUE}"/>`, 15, 15)}<span style="margin-left:4px">0,00 x 0,00</span></span>
      <span class="s" style="width:21px;padding-left:5px">${svg(`<path d="M1.500 1.500h8v8h-8z" stroke="#444" stroke-width="1.200"/><path d="M3.500 1.500v3h4v-3M3.500 9.500v-3h4v3" stroke="#444"/>`, 11, 11)}</span>
      <span class="s" style="width:29px"></span>
      <span class="s" style="width:245px;justify-content:center">Français (Belgique)</span>
      <span class="s" style="width:21px;justify-content:center">${svg(`<path d="M7 1v12M1 7h12M7 .5L5 3h4zM7 13.500L5 11h4zM.5 7L3 5v4zM13.500 7L11 5v4z" stroke="${BLUE}" fill="${BLUE}"/>`, 14, 14)}</span>
      <span class="s" style="width:136px;padding-left:9px">${svg(`<path d="M0 5h9" stroke="#333" stroke-width="1.600"/>`, 9, 10)}<i class="slider"></i>${svg(`<path d="M0 5h9M4.500 .5v9" stroke="#333" stroke-width="1.600"/>`, 9, 10)}</span>
      <span class="s" style="width:46px;justify-content:center">75 %</span>`;
  }
}

customElements.define('lo-scrollbar', LoScrollbar);
customElements.define('lo-combo', LoCombo);
customElements.define('lo-button', LoButton);
customElements.define('lo-check', LoCheck);
customElements.define('lo-section', LoSection);
customElements.define('lo-layout-thumb', LoLayoutThumb);
customElements.define('lo-tool', LoTool);
customElements.define('lo-toolbar', LoToolbar);
customElements.define('lo-titlebar', LoTitlebar);
customElements.define('lo-menubar', LoMenubar);
customElements.define('lo-slides', LoSlides);
customElements.define('lo-slide', LoSlide);
customElements.define('lo-workspace', LoWorkspace);
customElements.define('lo-sidebar', LoSidebar);
customElements.define('lo-statusbar', LoStatusbar);
customElements.define('lo-main', LoMain);
customElements.define('lo-app', LoApp);
</script>
</body>
</html>
